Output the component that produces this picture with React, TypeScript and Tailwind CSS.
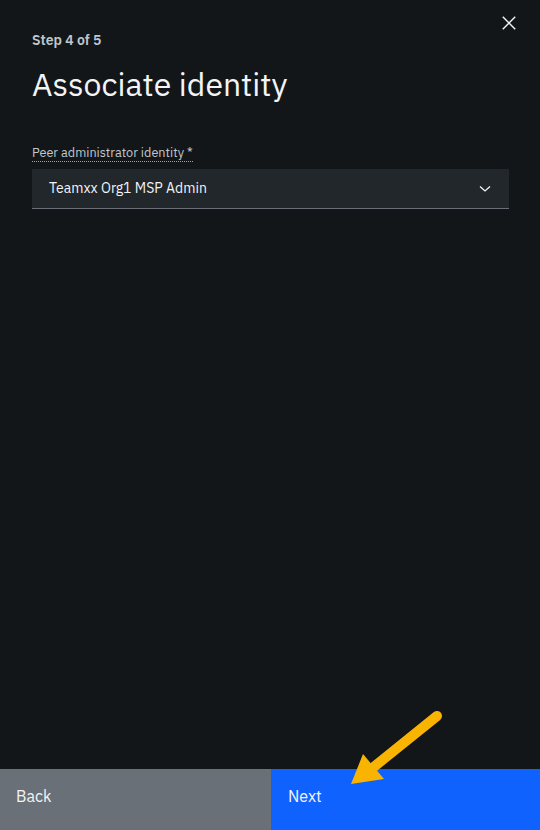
import React from "react";

export default function App() {
  return (
    <div
      className="relative flex h-[830px] w-[540px] flex-col bg-[#121619] text-[#f2f4f8]"
      style={{ fontFamily: '"IBM Plex Sans", "Noto Sans", Roboto, sans-serif' }}
    >
      <div className="flex flex-1 flex-col px-8">
        <div className="flex items-start justify-between pt-[30px]">
          <div className="text-[14px] font-semibold leading-[20px] text-[#c1c7cd]">Step 4 of 5</div>
          <button className="-mr-[9px] mt-[-15px] flex h-[16px] w-[16px] items-center justify-center text-[#f2f4f8]">
            <svg width="18" height="18" viewBox="0 0 18 18" fill="none" stroke="currentColor" strokeWidth="1.6">
              <path d="M2 2 L16 16 M16 2 L2 16" />
            </svg>
          </button>
        </div>
        <h1 className="mt-[14px] text-[32px] font-normal leading-[40px] text-[#f2f4f8]">
          Associate identity
        </h1>
        <div className="mt-[35px]">
          <span className="border-b border-dotted border-[#78a9ff] pb-[1px] text-[12.7px] leading-[16px] text-[#c1c7cd]">
            Peer administrator identity *
          </span>
        </div>
        <div className="mt-[6px] flex h-[40px] w-[477px] items-center justify-between border-b border-[#697077] bg-[#21272a] pl-[17px] pr-[18px]">
          <span className="text-[14px] text-[#f2f4f8]">Teamxx Org1 MSP Admin</span>
          <svg width="12" height="8" viewBox="0 0 12 8" fill="none" stroke="#f2f4f8" strokeWidth="1.3">
            <path d="M1 1.5 L6 6 L11 1.5" />
          </svg>
        </div>
      </div>
      <div className="flex h-[61px]">
        <button className="flex w-[271px] items-start bg-[#697077] pl-[16px] pt-[15px] text-left text-[16px] text-[#f2f4f8]">
          Back
        </button>
        <button className="flex flex-1 items-start bg-[#0f62fe] pl-[17px] pt-[15px] text-left text-[16px] text-[#f2f4f8]">
          Next
        </button>
      </div>
      <svg
        className="pointer-events-none absolute left-0 top-0"
        width="540"
        height="830"
        viewBox="0 0 540 830"
      >
        <line x1="437" y1="716" x2="370" y2="770" stroke="#f8b400" strokeWidth="10" strokeLinecap="round" />
        <polygon points="351,784 363,754 384,779" fill="#f8b400" />
      </svg>
    </div>
  );
}
